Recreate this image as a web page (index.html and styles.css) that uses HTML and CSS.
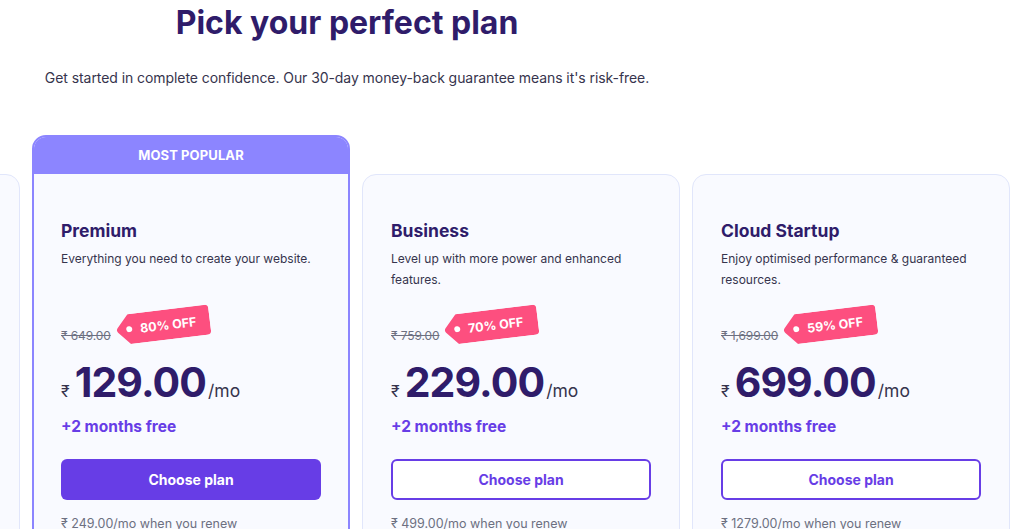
FILE: index.html
```html
<!DOCTYPE html>
<html lang="en">
<head>
<meta charset="utf-8">
<title>Pick your perfect plan</title>
<link rel="stylesheet" href="styles.css">
</head>
<body>
<div class="page">
  <header class="intro">
    <h1 class="intro-title">Pick your perfect plan</h1>
    <p class="intro-sub">Get started in complete confidence. Our 30-day money-back guarantee means it's risk-free.</p>
  </header>

  <div class="plans">
    <div class="card card--ghost"></div>

    <div class="card card--popular">
      <div class="popular-label">MOST POPULAR</div>
      <div class="card-body">
        <h2 class="plan-name">Premium</h2>
        <p class="plan-desc">Everything you need to create your website.</p>
        <div class="old-row">
          <span class="old-price">₹ 649.00</span>
          <span class="tag">
            <svg class="tag-shape" viewBox="0 0 94 30" width="94" height="30" aria-hidden="true"><path d="M13 0H90a4 4 0 0 1 4 4V26a4 4 0 0 1-4 4H13L1.5 17.2a3.4 3.4 0 0 1 0-4.4Z" fill="#fd4f7f"/><circle cx="13" cy="15" r="3" fill="#fff"/></svg>
            <span class="tag-text">80% OFF</span>
          </span>
        </div>
        <div class="price-row">
          <span class="currency">₹</span>
          <span class="amount">129.00</span>
          <span class="per">/mo</span>
        </div>
        <div class="bonus">+2 months free</div>
        <button class="btn btn--solid">Choose plan</button>
        <p class="renew">₹ 249.00/mo when you renew</p>
      </div>
    </div>

    <div class="card">
      <div class="card-body">
        <h2 class="plan-name">Business</h2>
        <p class="plan-desc">Level up with more power and enhanced features.</p>
        <div class="old-row">
          <span class="old-price">₹ 759.00</span>
          <span class="tag">
            <svg class="tag-shape" viewBox="0 0 94 30" width="94" height="30" aria-hidden="true"><path d="M13 0H90a4 4 0 0 1 4 4V26a4 4 0 0 1-4 4H13L1.5 17.2a3.4 3.4 0 0 1 0-4.4Z" fill="#fd4f7f"/><circle cx="13" cy="15" r="3" fill="#fff"/></svg>
            <span class="tag-text">70% OFF</span>
          </span>
        </div>
        <div class="price-row">
          <span class="currency">₹</span>
          <span class="amount">229.00</span>
          <span class="per">/mo</span>
        </div>
        <div class="bonus">+2 months free</div>
        <button class="btn btn--outline">Choose plan</button>
        <p class="renew">₹ 499.00/mo when you renew</p>
      </div>
    </div>

    <div class="card">
      <div class="card-body">
        <h2 class="plan-name">Cloud Startup</h2>
        <p class="plan-desc">Enjoy optimised performance &amp; guaranteed resources.</p>
        <div class="old-row">
          <span class="old-price">₹ 1,699.00</span>
          <span class="tag">
            <svg class="tag-shape" viewBox="0 0 94 30" width="94" height="30" aria-hidden="true"><path d="M13 0H90a4 4 0 0 1 4 4V26a4 4 0 0 1-4 4H13L1.5 17.2a3.4 3.4 0 0 1 0-4.4Z" fill="#fd4f7f"/><circle cx="13" cy="15" r="3" fill="#fff"/></svg>
            <span class="tag-text">59% OFF</span>
          </span>
        </div>
        <div class="price-row">
          <span class="currency">₹</span>
          <span class="amount">699.00</span>
          <span class="per">/mo</span>
        </div>
        <div class="bonus">+2 months free</div>
        <button class="btn btn--outline">Choose plan</button>
        <p class="renew">₹ 1279.00/mo when you renew</p>
      </div>
    </div>
  </div>
</div>
</body>
</html>
```

FILE: styles.css
```css
html, body {
  margin: 0;
  padding: 0;
  background: #ffffff;
  overflow: hidden;
}

body {
  font-family: "Inter", "DejaVu Sans", sans-serif;
  color: #36344d;
}

.page {
  width: 1024px;
  height: 529px;
  overflow: hidden;
}

.intro {
  width: 694px;
  text-align: center;
}

.intro-title {
  margin: 3px 0 0;
  font-size: 32px;
  line-height: 40px;
  font-weight: 700;
  color: #2f1c6a;
  letter-spacing: 0;
}

.intro-sub {
  margin: 25px 0 0;
  font-size: 14px;
  line-height: 20px;
  color: #36344d;
  letter-spacing: -0.07px;
}

.plans {
  display: flex;
  align-items: flex-start;
  gap: 12px;
  margin: 47px 0 0 -298px;
}

.card {
  flex: 0 0 318px;
  box-sizing: border-box;
  margin-top: 39px;
  background: #f9faff;
  border: 1px solid #e1e6fb;
  border-radius: 14px;
  min-height: 420px;
}

.card--popular {
  margin-top: 0;
  border: 2px solid #8c85ff;
  border-radius: 14px;
  overflow: hidden;
}

.popular-label {
  height: 37px;
  background: #8c85ff;
  color: #ffffff;
  font-size: 13px;
  font-weight: 700;
  line-height: 37px;
  text-align: center;
  letter-spacing: 0.1px;
}

.card-body {
  padding: 44px 28px 30px;
}

.card--popular .card-body {
  padding: 45px 27px 30px;
}

.plan-name {
  margin: 0;
  font-size: 17.5px;
  line-height: 24px;
  font-weight: 700;
  color: #2f1c6a;
}

.plan-desc {
  margin: 5px 0 0;
  min-height: 42px;
  font-size: 12px;
  line-height: 21px;
  color: #36344d;
}

.old-row {
  display: flex;
  align-items: center;
  gap: 5px;
  margin-top: 36px;
  height: 20px;
}

.old-price {
  font-size: 12px;
  line-height: 20px;
  color: #6d7081;
  text-decoration: line-through;
  letter-spacing: -0.1px;
}

.tag {
  display: inline-grid;
  width: 94px;
  height: 30px;
  transform: translateY(-11px) rotate(-7deg);
}

.tag-shape,
.tag-text {
  grid-area: 1 / 1;
}

.tag-text {
  align-self: center;
  justify-self: start;
  margin-left: 24px;
  font-size: 12.5px;
  font-weight: 700;
  color: #ffffff;
  letter-spacing: 0;
}

.price-row {
  display: flex;
  align-items: baseline;
  margin-top: 12px;
  height: 48px;
  line-height: 48px;
  color: #2f1c6a;
}

.currency {
  font-size: 16px;
  color: #36344d;
  margin-right: 5px;
}

.amount {
  font-size: 41px;
  font-weight: 700;
  letter-spacing: -0.9px;
  color: #2f1c6a;
}

.per {
  font-size: 17.5px;
  color: #36344d;
  margin-left: 2px;
}

.bonus {
  margin-top: 9px;
  font-size: 15.5px;
  line-height: 24px;
  font-weight: 700;
  color: #673de6;
}

.btn {
  display: block;
  box-sizing: border-box;
  width: 100%;
  height: 41px;
  margin-top: 20px;
  border-radius: 6px;
  font-family: inherit;
  font-size: 14px;
  font-weight: 700;
  cursor: pointer;
}

.btn--solid {
  background: #673de6;
  border: none;
  color: #ffffff;
}

.btn--outline {
  background: #ffffff;
  border: 2px solid #673de6;
  color: #673de6;
}

.renew {
  margin: 14px 0 0;
  font-size: 12.5px;
  line-height: 20px;
  color: #6d7081;
}
```
